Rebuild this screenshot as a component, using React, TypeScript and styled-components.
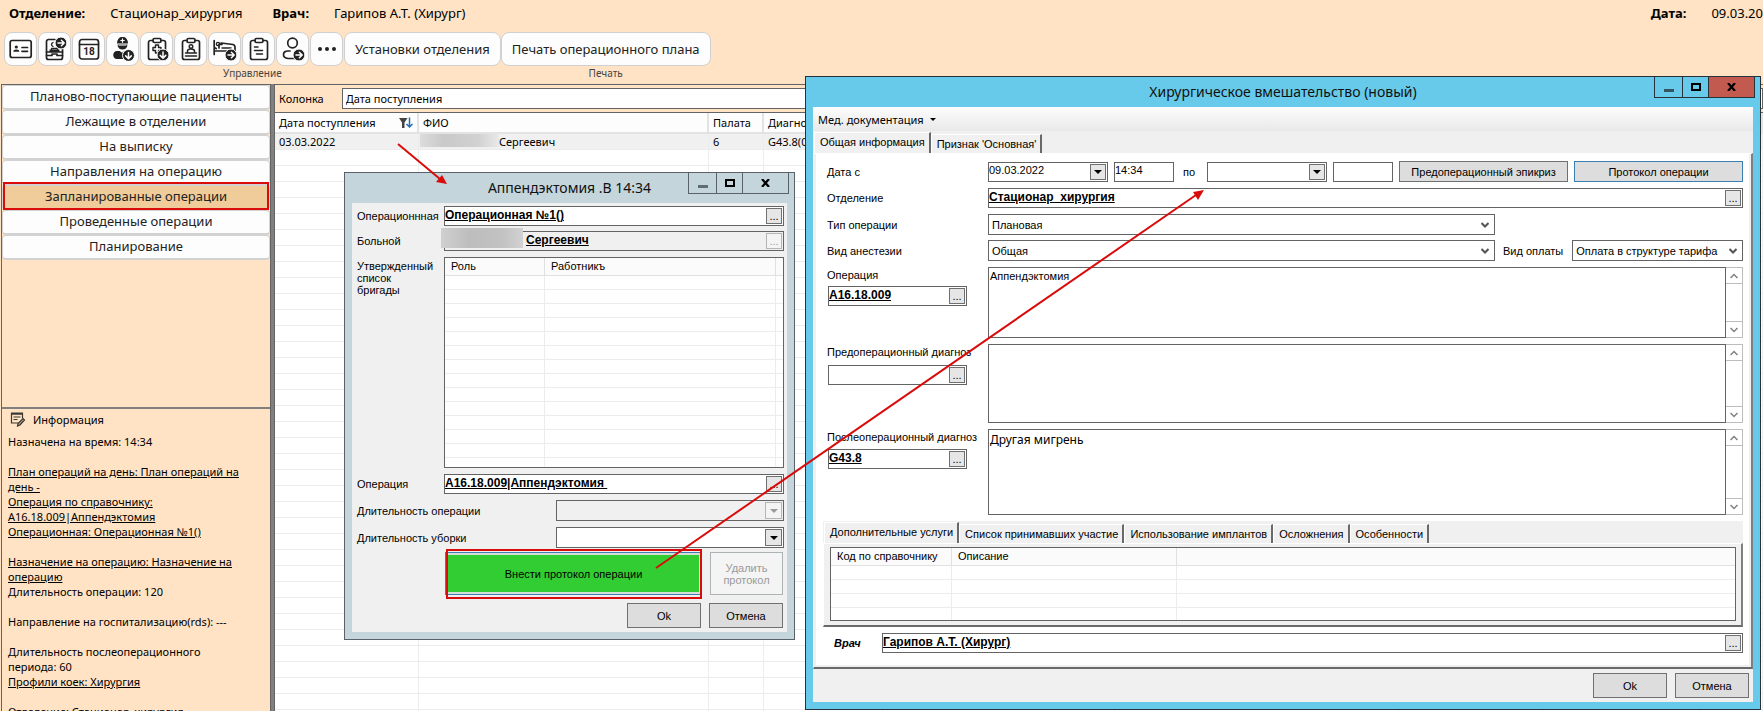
import React, { ReactNode, useId } from "react";
import styled, { createGlobalStyle, css } from "styled-components";

const ui = '"Noto Sans", "Open Sans", sans-serif';
const classic = '"Liberation Sans", Arial, sans-serif';
const c = {
  peach: "#ffe3c4",
  line: "#646464",
  face: "#f0f0f0",
  button: "#dddddd",
  grid: "#ececec",
  red: "#d90b0b",
};

const Global = createGlobalStyle`
  *, *::before, *::after { box-sizing: border-box; }
  body { margin: 0; background: #fff; color: #000; font: 11px/15px ${ui}; }
  button, input, select, textarea { font: inherit; color: inherit; margin: 0; border-radius: 0; }
  button { padding: 0; }
  input, select, textarea { outline: none; }
`;

const Screen = styled.div`
  position: relative;
  display: flex;
  flex-direction: column;
  height: 100vh;
  overflow: hidden;
  background: ${c.peach};
`;

/* Header */

const InfoBar = styled.header`
  display: flex;
  align-items: center;
  gap: 30px;
  height: 26px;
  padding-left: 9px;
  font-size: 13px;
  white-space: nowrap;
`;
const InfoPair = styled.div<{ $end?: boolean }>`
  display: flex;
  gap: 25px;
  margin-left: ${(p) => (p.$end ? "auto" : "0")};
`;

const Toolbar = styled.div`
  display: flex;
  padding: 6px 0 3px 4px;
`;
const ToolGroup = styled.div`
  display: flex;
  flex-direction: column;
  align-items: center;
  font-size: 10px;
  color: #444;
`;
const ToolRow = styled.div`
  display: flex;
  gap: 1px;
`;
const ToolButton = styled.button<{ $text?: boolean }>`
  display: flex;
  align-items: center;
  justify-content: center;
  width: ${(p) => (p.$text ? "auto" : "33px")};
  height: 34px;
  padding: 0 ${(p) => (p.$text ? "10px" : "0")};
  border: 1px solid #d0d0d0;
  border-radius: 8px;
  background: #fdfdfd;
  color: #222;
  font-size: 13px;
  white-space: nowrap;
`;

/* Sidebar */

const Body = styled.div`
  display: flex;
  flex: 1;
  min-height: 0;
`;
const Sidebar = styled.aside`
  display: flex;
  flex-direction: column;
  flex: none;
  width: 269px;
  margin-left: 1px;
  border-top: 1px solid ${c.line};
  border-left: 1px solid ${c.line};
`;
const Splitter = styled.div`
  flex: none;
  width: 5px;
  background: #808080;
  border-left: 1px solid ${c.line};
  border-right: 1px solid ${c.line};
`;
const Nav = styled.nav`
  display: flex;
  flex: none;
  flex-direction: column;
  height: 324px;
  border-bottom: 2px solid #808080;
`;
const NavButton = styled.button<{ $active?: boolean }>`
  position: relative;
  height: 25px;
  border: 1px solid #d2d2d2;
  border-bottom-width: 2px;
  border-radius: 4px;
  background: ${(p) => (p.$active ? "#efcc99" : "#fdfdfd")};
  color: #222;
  font-size: 13px;
  line-height: 18px;
  padding-bottom: 2px;
`;
const NavFrame = styled.span`
  position: absolute;
  inset: -4px 0 -2px;
  border: 2px solid ${c.red};
`;
const InfoHead = styled.h2`
  display: flex;
  flex: none;
  align-items: center;
  gap: 7px;
  margin: 0;
  padding: 1px 8px 5px;
  font-size: 11px;
  font-weight: 400;
  line-height: 19px;
`;
const InfoList = styled.div`
  display: flex;
  flex-direction: column;
  align-items: flex-start;
  width: 252px;
  padding: 0 6px;
`;
const InfoText = styled.p<{ $after?: boolean }>`
  margin: 0 0 ${(p) => (p.$after ? "15px" : "0")};
`;
const InfoLink = styled.a<{ $after?: boolean }>`
  margin-bottom: ${(p) => (p.$after ? "15px" : "0")};
  color: inherit;
`;

/* Patient list */

const Main = styled.main`
  flex: 1;
  min-width: 0;
  border-top: 1px solid ${c.line};
`;
const FilterRow = styled.div`
  display: flex;
  align-items: center;
  gap: 18px;
  height: 27px;
  padding-left: 4px;
`;
const FilterInput = styled.input`
  flex: 1;
  height: 21px;
  padding: 0 3px;
  border: 1px solid ${c.line};
  background: #fff;
`;
const PatientTable = styled.table`
  width: 100%;
  table-layout: fixed;
  border-collapse: separate;
  border-spacing: 0;
  border-top: 1px solid ${c.line};
  background: #fff;
  th {
    height: 21px;
    padding: 0 4px;
    border-right: 2px solid #e3e3e3;
    border-bottom: 2px solid #e3e3e3;
    background: #fdfdfd;
    font-weight: 400;
    text-align: left;
    white-space: nowrap;
  }
  td {
    height: 16px;
    padding: 0 4px;
    border-right: 1px solid ${c.grid};
    border-bottom: 1px solid ${c.grid};
    line-height: 15px;
    white-space: nowrap;
    overflow: hidden;
  }
`;
const PatientRow = styled.tr`
  background: #f0f0f0;
`;
const SortHead = styled.span`
  display: flex;
  align-items: center;
  justify-content: space-between;
`;
const Masked = styled.span`
  display: inline-block;
  width: 79px;
  height: 13px;
  margin-left: -3px;
  vertical-align: top;
  background: linear-gradient(90deg, #dcdcdc, #c9c9c9 30%, #d2d2d2 75%, #e9e9e9);
`;

/* Windows */

const Window = styled.section<{ $active?: boolean }>`
  position: absolute;
  display: flex;
  flex-direction: column;
  padding: 0 7px 7px;
  border: 1px solid ${(p) => (p.$active ? "#26323a" : "#59626a")};
  background: ${(p) => (p.$active ? "#67caea" : "#c4d5db")};
  font: 11px/12px ${classic};
`;
const PlanWindow = styled(Window)`
  top: 172px;
  left: 344px;
  width: 451px;
`;
const SurgeryWindow = styled(Window)`
  top: 76px;
  left: 805px;
  right: 2px;
`;
const WindowTitle = styled.h1`
  margin: 0;
  height: 30px;
  font: 400 14px/30px ${ui};
  text-align: center;
  color: #111;
`;
const WindowControls = styled.div<{ $active?: boolean }>`
  position: absolute;
  top: -1px;
  right: 5px;
  display: flex;
  button {
    display: flex;
    align-items: center;
    justify-content: center;
    width: 29px;
    height: 22px;
    margin-left: -1px;
    border: 1px solid ${(p) => (p.$active ? "#26323a" : "#59626a")};
    background: none;
  }
  button:nth-child(2) { width: 27px; }
  button:last-child {
    width: 47px;
    background: ${(p) => (p.$active ? "#c35a4f" : "none")};
  }
`;
const Client = styled.div`
  display: flex;
  flex-direction: column;
  background: ${c.face};
`;

/* Controls */

const box = css`
  border: 1px solid ${c.line};
  background: #fff;
`;
const FieldBox = styled.div<{ $disabled?: boolean; $width?: number }>`
  position: relative;
  display: flex;
  flex: ${(p) => (p.$width ? "none" : "1")};
  width: ${(p) => (p.$width ? `${p.$width}px` : "auto")};
  min-width: 0;
  height: 20px;
  padding: 1px 1px 1px 0;
  ${box}
  background: ${(p) => (p.$disabled ? c.face : "#fff")};
`;
const FieldInput = styled.input<{ $link?: boolean; $inset?: boolean }>`
  flex: 1;
  width: 0;
  height: ${(p) => (p.$link ? "14px" : "12px")};
  padding: 0;
  padding-left: ${(p) => (p.$inset ? "81px" : "0")};
  border: 0;
  background: none;
  ${(p) =>
    p.$link &&
    css`
      font-size: 12px;
      font-weight: 700;
      text-decoration: underline;
    `}
`;
const SmallButton = styled.button`
  display: flex;
  align-items: center;
  justify-content: center;
  flex: none;
  width: 16px;
  height: 16px;
  border: 1px solid #707070;
  background: #e6e6e6;
  line-height: 10px;
  &:disabled {
    border-color: #b5b5b5;
    background: #f4f4f4;
    color: #999;
  }
`;
const NameMask = styled.span`
  position: absolute;
  top: -4px;
  left: -4px;
  width: 82px;
  height: 20px;
  background: linear-gradient(90deg, #d0d0d0, #bdbdbd 35%, #c2c2c2 75%, #d2d2d2);
`;
const SelectBox = styled.div<{ $disabled?: boolean }>`
  position: relative;
  display: flex;
  flex: 1;
  height: 21px;
  ${box}
  background: ${(p) => (p.$disabled ? c.face : "#fff")};
  select {
    flex: 1;
    appearance: none;
    padding: 0 20px 0 3px;
    border: 0;
    background: none;
  }
`;
const SelectMark = styled.span<{ $boxed?: boolean; $disabled?: boolean }>`
  position: absolute;
  top: 1px;
  right: 1px;
  display: flex;
  align-items: center;
  justify-content: center;
  width: 17px;
  height: 17px;
  pointer-events: none;
  color: ${(p) => (p.$disabled ? "#999" : "#000")};
  border: ${(p) => (p.$boxed ? `1px solid ${p.$disabled ? "#b5b5b5" : "#707070"}` : "0")};
  background: ${(p) => (p.$boxed ? (p.$disabled ? "#f4f4f4" : "#e6e6e6") : "none")};
`;
const PushButton = styled.button<{ $fill?: boolean; $focus?: boolean }>`
  flex: ${(p) => (p.$fill ? "1" : "none")};
  width: 74px;
  height: ${(p) => (p.$fill ? "21px" : "25px")};
  border: 1px solid ${(p) => (p.$focus ? "#3c7fb1" : "#707070")};
  background: ${c.button};
  white-space: nowrap;
`;
const RowPair = styled.div`
  display: flex;
  flex-direction: column;
  gap: 5px;
`;

/* Operation plan window */

const PlanForm = styled.form`
  display: flex;
  flex-direction: column;
  gap: 6px;
  padding: 3px 3px 4px 5px;
`;
const PlanRow = styled.div<{ $wide?: boolean; $top?: boolean }>`
  display: flex;
  align-items: ${(p) => (p.$top ? "flex-start" : "center")};
  label, > span {
    flex: none;
    width: ${(p) => (p.$wide ? "199px" : "87px")};
    padding-right: 12px;
  }
  > label, > span { padding-top: ${(p) => (p.$top ? "3px" : "0")}; }
`;
const NameLabel = styled.label`
  white-space: nowrap;
`;
const ListFrame = styled.div<{ $height: number }>`
  flex: 1;
  height: ${(p) => p.$height}px;
  overflow: hidden;
  ${box}
`;
const ListTable = styled.table`
  width: 100%;
  table-layout: fixed;
  border-collapse: separate;
  border-spacing: 0;
  th {
    height: 18px;
    padding: 0 6px 2px;
    border-right: 1px solid #e0e0e0;
    border-bottom: 1px solid #e0e0e0;
    background: #fbfbfb;
    font-weight: 400;
    text-align: left;
    white-space: nowrap;
  }
  td {
    height: 14px;
    padding: 0;
    border-right: 1px solid ${c.grid};
    border-bottom: 1px solid ${c.grid};
  }
  th:last-child, td:last-child { border-right: 0; }
`;
const ActionRow = styled.div`
  display: flex;
  gap: 8px;
  padding-left: 88px;
  margin-top: -2px;
`;
const ProtocolWrap = styled.div`
  position: relative;
  flex: 1;
  display: flex;
`;
const ProtocolButton = styled.button`
  flex: 1;
  height: 43px;
  border: 1px solid #3c7fb1;
  background: #32cd32;
  box-shadow: inset 0 0 0 2px #d5dfd8;
`;
const ProtocolFrame = styled.span`
  position: absolute;
  inset: -3px 0 -4px 1px;
  border: 2px solid ${c.red};
  pointer-events: none;
`;
const DeleteButton = styled.button`
  width: 73px;
  height: 43px;
  margin-right: 1px;
  border: 1px solid #adb2b5;
  background: #f4f4f4;
  color: #9a9a9a;
`;
const Buttons = styled.div<{ $footer?: boolean }>`
  display: flex;
  justify-content: flex-end;
  gap: 8px;
  padding: ${(p) => (p.$footer ? "4px 4px" : "2px 1px 0")};
`;

/* Surgery window */

const MenuStrip = styled.div`
  display: flex;
  height: 24px;
  padding: 0 5px;
  background: linear-gradient(#fcfcfc, #e9e9e9);
  button {
    display: flex;
    align-items: center;
    gap: 6px;
    border: 0;
    background: none;
    font: 11px/15px ${ui};
  }
`;
const TabList = styled.div`
  display: flex;
  align-items: flex-end;
  height: 22px;
  padding-left: 1px;
`;
const Tab = styled.button<{ $active?: boolean }>`
  height: ${(p) => (p.$active ? "21px" : "19px")};
  padding: 0 4px ${(p) => (p.$active ? "3px" : "0")} 5px;
  border: 0;
  border-top: 1px solid #fff;
  border-left: 1px solid #fff;
  border-right: 2px solid #696969;
  background: ${c.face};
  white-space: nowrap;
`;
const TabPage = styled.div`
  border: solid;
  border-width: 1px 2px 2px 1px;
  border-color: #fff #808080 #696969 #fff;
  background: ${c.face};
  padding: 0 2px 2px;
`;
const SurgeryForm = styled.form`
  display: flex;
  flex-direction: column;
  gap: 6px;
  padding: 7px 6px 12px 11px;
  background: #fff;
`;
const FormRow = styled.div`
  display: grid;
  grid-template-columns: 161px minmax(0, 1fr);
  align-items: center;
`;
const Line = styled.div<{ $gap: number }>`
  display: flex;
  align-items: center;
  gap: ${(p) => p.$gap}px;
`;
const ToLabel = styled.label`
  padding: 0 6px 0 3px;
`;
const Split = styled.div`
  display: grid;
  grid-template-columns: minmax(0, 1fr) 240px;
  gap: 8px;
`;
const CodeColumn = styled.div<{ $gap: number }>`
  display: flex;
  flex-direction: column;
  align-self: start;
  gap: ${(p) => p.$gap}px;
  width: 140px;
  padding: 2px 0 0 1px;
  label {
    margin-left: -1px;
    white-space: nowrap;
  }
  div { flex: none; }
`;
const MemoBox = styled.div<{ $height: number }>`
  display: flex;
  height: ${(p) => p.$height}px;
`;
const Memo = styled.textarea<{ $large?: boolean }>`
  flex: 1;
  height: 100%;
  padding: 2px 1px;
  resize: none;
  overflow: hidden;
  ${box}
  ${(p) => p.$large && css`font: 12px/15px ${ui};`}
`;
const ScrollBar = styled.div`
  display: flex;
  flex-direction: column;
  justify-content: space-between;
  width: 17px;
  border: 1px solid #bdbdbd;
  border-left: 0;
  button {
    display: flex;
    align-items: center;
    justify-content: center;
    height: 16px;
    border: 0;
    background: #fff;
    color: #808080;
  }
  button:first-child { border-bottom: 1px solid #bdbdbd; }
  button:last-child { border-top: 1px solid #bdbdbd; }
`;
const ServiceTabs = styled.div`
  margin-left: -4px;
  background: ${c.face};
`;
const ServicePage = styled(TabPage)`
  padding: 3px 5px 4px 6px;
`;
const DoctorRow = styled.div`
  display: flex;
  align-items: center;
  padding-left: 7px;
  label {
    width: 48px;
    font-weight: 700;
    font-style: italic;
  }
`;

const Arrows = styled.svg`
  position: absolute;
  inset: 0;
  width: 100%;
  height: 100%;
  pointer-events: none;
`;

/* Icons */

const Svg = ({ children }: { children: ReactNode }) => (
  <svg width="24" height="24" viewBox="0 0 24 24" fill="none" stroke="#222" strokeWidth="1.7" strokeLinecap="round" strokeLinejoin="round" aria-hidden="true">
    {children}
  </svg>
);

const Badge = ({ x, y, down }: { x: number; y: number; down?: boolean }) => (
  <g transform={`translate(${x} ${y}) rotate(${down ? 90 : 0})`}>
    <circle r="6" fill="#222" stroke="#fdfdfd" strokeWidth="1" />
    <path d="M-3 0H3M0.4 -2.8L3.2 0L0.4 2.8" stroke="#fff" strokeWidth="1.5" />
  </g>
);

const Clipboard = () => (
  <>
    <path d="M8 3.5H5.5a2 2 0 0 0-2 2v15a2 2 0 0 0 2 2h13a2 2 0 0 0 2-2v-15a2 2 0 0 0-2-2H16" />
    <rect x="8" y="1.5" width="8" height="4" rx="1.5" />
  </>
);

const CardIcon = () => (
  <Svg>
    <rect x="1.2" y="3.5" width="21" height="17" rx="2" />
    <circle cx="7.3" cy="10" r="1.6" fill="#222" stroke="none" />
    <path d="M4.3 14.8a3 2.2 0 0 1 6 0z" fill="#222" stroke="none" />
    <path d="M13 10.5h5.5M13 14.3h5.5" />
  </Svg>
);
const AdmissionIcon = () => (
  <Svg>
    <path d="M12 2.5H5.5a2 2 0 0 0-2 2V20.5a2 2 0 0 0 2 2h12a2 2 0 0 0 2-2V12" />
    <path d="M8.5 13v-1.5h6V13M10 5.5c-2 1-2 3 0 4" strokeWidth="1.3" />
    <path d="M3.5 15h16M3.5 18.5h5.5v-1.5h5v1.5h5.5" />
    <rect x="6.5" y="12.5" width="10" height="2.5" fill="#222" stroke="none" />
    <Badge x={18} y={6} />
  </Svg>
);
const CalendarIcon = () => (
  <Svg>
    <rect x="2.5" y="2.5" width="19" height="19.5" rx="2.5" />
    <path d="M2.5 7.5h19" />
    <text x="12" y="18.3" textAnchor="middle" fontFamily="Roboto, sans-serif" fontWeight="700" fontSize="10" fill="#222" stroke="none">18</text>
  </Svg>
);
const SurgeonIcon = () => (
  <Svg>
    <path d="M6 6.5c0-9 11-9 11 0z" fill="#222" stroke="none" />
    <path d="M11.5 1.8v3.4M9.8 3.5h3.4" stroke="#fff" strokeWidth="1.2" />
    <path d="M6.7 7.5h9.6v1a4.8 4 0 0 1-9.6 0z" fill="#222" stroke="none" />
    <path d="M8 8.2h7" stroke="#fff" strokeWidth="0.8" />
    <path d="M6 14h3c1 2 5 2 6 0l4 1v7H6c-5 0-5-8 0-8z" fill="#222" stroke="none" />
    <Badge x={17.5} y={18.5} down />
  </Svg>
);
const MedClipboardIcon = () => (
  <Svg>
    <Clipboard />
    <path d="M10.5 8h3v2.5H16v3h-2.5V16h-3v-2.5H8v-3h2.5z" strokeWidth="1.4" />
    <Badge x={18} y={18} down />
  </Svg>
);
const PatientClipboardIcon = () => (
  <Svg>
    <Clipboard />
    <circle cx="12" cy="9.5" r="1.8" strokeWidth="1.4" />
    <path d="M8.5 15v-1a3.5 2 0 0 1 7 0v1M6.5 16h11M6.5 19h11" strokeWidth="1.5" />
  </Svg>
);
const BedIcon = () => (
  <Svg>
    <path d="M1.2 3.5v14M1.2 14H14M1.2 10.5l2 1M6 11V7.5h3M8 6l12 1.5a3 3 0 0 1 2 3v3" />
    <circle cx="5" cy="7" r="1.6" strokeWidth="1.4" />
    <path d="M9 11h9" strokeWidth="1.4" />
    <Badge x={18} y={18} />
  </Svg>
);
const TasksIcon = () => (
  <Svg>
    <Clipboard />
    <path d="M7.5 10h3.5M7.5 13.5h8M9.5 17h6" strokeWidth="1.5" />
  </Svg>
);
const TransferIcon = () => (
  <Svg>
    <circle cx="11.5" cy="6" r="4.8" />
    <path d="M9 14H7c-6 0-6 7 0 7.5h6" />
    <Badge x={18} y={18} />
  </Svg>
);
const MoreIcon = () => (
  <Svg>
    <g fill="#222" stroke="none">
      <circle cx="5" cy="12" r="2" />
      <circle cx="12" cy="12" r="2" />
      <circle cx="19" cy="12" r="2" />
    </g>
  </Svg>
);
const NoteIcon = () => (
  <svg width="16" height="15" viewBox="0 0 16 15" fill="none" stroke="#3c3833" strokeWidth="1.2" aria-hidden="true">
    <path d="M8 11H1.5V1h11v5.5M1.5 2.2h11" />
    <path d="M3.5 5h7M3.5 7.5h4" />
    <path d="M7.5 14l.5-2.5 5-5 1.5 1.5-4.5 5z" fill="#a89c8b" />
  </svg>
);
const FilterIcon = () => (
  <svg width="14" height="12" viewBox="0 0 14 12" aria-hidden="true">
    <path d="M0 1h8.5L5.5 5.5V11H3V5.5z" fill="#444" />
    <path d="M10.5 0.5v9M7.5 7l3 3 3-3" fill="none" stroke="#1f6fb5" strokeWidth="1.5" />
  </svg>
);
const Triangle = ({ small }: { small?: boolean }) => (
  <svg width={small ? 6 : 8} height={small ? 3 : 4} viewBox="0 0 8 4" aria-hidden="true">
    <path d="M0 0h8L4 4z" fill="currentColor" />
  </svg>
);
const Chevron = ({ up, dark }: { up?: boolean; dark?: boolean }) => (
  <svg width="8" height="6" viewBox="0 0 8 6" fill="none" stroke={dark ? "#555" : "currentColor"} strokeWidth={dark ? 2 : 1.5} aria-hidden="true">
    <path d={up ? "M0.5 5L4 1.5L7.5 5" : "M0.5 1L4 4.5L7.5 1"} />
  </svg>
);

/* Composite controls */

const Controls = ({ active }: { active?: boolean }) => (
  <WindowControls $active={active}>
    <button type="button" aria-label="Свернуть">
      <svg width="10" height="12" aria-hidden="true"><path d="M0 8h10v3H0z" fill={active ? "#33535f" : "#626c70"} /></svg>
    </button>
    <button type="button" aria-label="Развернуть">
      <svg width="10" height="8" aria-hidden="true"><path d="M1 1h8v6H1z" fill="none" stroke="#000" strokeWidth="2" /></svg>
    </button>
    <button type="button" aria-label="Закрыть">
      <svg width="9" height="8" aria-hidden="true"><path d="M1 0l7 8M8 0L1 8" stroke="#000" strokeWidth="2.2" /></svg>
    </button>
  </WindowControls>
);

type LookupProps = { id: string; value?: string; disabled?: boolean; masked?: boolean };
const Lookup = ({ id, value = "", disabled, masked }: LookupProps) => (
  <FieldBox $disabled={disabled}>
    <FieldInput id={id} defaultValue={value} readOnly={disabled} $link $inset={masked} />
    {masked && <NameMask />}
    <SmallButton type="button" disabled={disabled} aria-label="Выбрать">...</SmallButton>
  </FieldBox>
);

const DateField = ({ id, value = "" }: { id: string; value?: string }) => (
  <FieldBox $width={120}>
    <FieldInput id={id} defaultValue={value} />
    <SmallButton type="button" aria-label="Календарь"><Triangle /></SmallButton>
  </FieldBox>
);

type DropProps = { id: string; value?: string; boxed?: boolean; disabled?: boolean };
const Drop = ({ id, value = "", boxed, disabled }: DropProps) => (
  <SelectBox $disabled={disabled}>
    <select id={id} disabled={disabled} defaultValue={value}>
      <option>{value}</option>
    </select>
    <SelectMark $boxed={boxed} $disabled={disabled}>{boxed ? <Triangle /> : <Chevron dark />}</SelectMark>
  </SelectBox>
);

type MemoFieldProps = { label: string; code?: string; text?: string; height: number; gap: number; large?: boolean };
const MemoField = ({ label, code, text, height, gap, large }: MemoFieldProps) => {
  const id = useId();
  return (
    <FormRow>
      <CodeColumn $gap={gap}>
        <label htmlFor={id}>{label}</label>
        <Lookup id={id} value={code} />
      </CodeColumn>
      <MemoBox $height={height}>
        <Memo aria-label={label} defaultValue={text} $large={large} />
        <ScrollBar>
          <button type="button" aria-label="Вверх"><Chevron up /></button>
          <button type="button" aria-label="Вниз"><Chevron /></button>
        </ScrollBar>
      </MemoBox>
    </FormRow>
  );
};

type ListProps = { height: number; heads: string[]; widths: (number | undefined)[]; rows: number };
const List = ({ height, heads, widths, rows }: ListProps) => (
  <ListFrame $height={height}>
    <ListTable>
      <colgroup>{widths.map((w, i) => <col key={i} width={w} />)}</colgroup>
      <thead><tr>{heads.map((h, i) => <th key={i}>{h}</th>)}</tr></thead>
      <tbody>
        {Array.from({ length: rows }, (_, r) => (
          <tr key={r}>{heads.map((_, i) => <td key={i} />)}</tr>
        ))}
      </tbody>
    </ListTable>
  </ListFrame>
);

const tools = [CardIcon, AdmissionIcon, CalendarIcon, SurgeonIcon, MedClipboardIcon, PatientClipboardIcon, BedIcon, TasksIcon, TransferIcon, MoreIcon];
const toolNames = ["Карта", "Поступление", "Календарь", "Хирург", "Назначения", "Пациент", "Койка", "Задачи", "Перевод", "Ещё"];
const sections = ["Планово-поступающие пациенты", "Лежащие в отделении", "На выписку", "Направления на операцию", "Запланированные операции", "Проведенные операции", "Планирование"];
const patientColumns = [144, 290, 55, 119, 232, 284, 144, 157, undefined];
const serviceTabs = ["Дополнительные услуги", "Список принимавших участие", "Использование имплантов", "Осложнения", "Особенности"];

const Patients = () => (
  <PatientTable>
    <colgroup>{patientColumns.map((w, i) => <col key={i} width={w} />)}</colgroup>
    <thead>
      <tr>
        <th><SortHead>Дата поступления <FilterIcon /></SortHead></th>
        <th>ФИО</th>
        <th>Палата</th>
        <th>Диагноз</th>
        {patientColumns.slice(4).map((_, i) => <th key={i} />)}
      </tr>
    </thead>
    <tbody>
      <PatientRow>
        <td>03.03.2022</td>
        <td><Masked />Сергеевич</td>
        <td>6</td>
        <td>G43.8(0)</td>
        {patientColumns.slice(4).map((_, i) => <td key={i} />)}
      </PatientRow>
      {Array.from({ length: 36 }, (_, r) => (
        <tr key={r}>{patientColumns.map((_, i) => <td key={i} />)}</tr>
      ))}
    </tbody>
  </PatientTable>
);

const OperationPlan = () => (
  <PlanWindow>
    <WindowTitle>Аппендэктомия .В 14:34</WindowTitle>
    <Controls />
    <Client>
      <PlanForm>
        <RowPair>
          <PlanRow>
            <NameLabel htmlFor="room">Операционнная</NameLabel>
            <Lookup id="room" value="Операционная №1()" />
          </PlanRow>
          <PlanRow>
            <label htmlFor="patient">Больной</label>
            <Lookup id="patient" value="Сергеевич" disabled masked />
          </PlanRow>
        </RowPair>
        <PlanRow $top>
          <span>Утвержденный список бригады</span>
          <List height={211} heads={["Роль", "Работникъ", ""]} widths={[100, 231, undefined]} rows={15} />
        </PlanRow>
        <PlanRow>
          <label htmlFor="operation">Операция</label>
          <Lookup id="operation" value="A16.18.009|Аппендэктомия " />
        </PlanRow>
        <PlanRow $wide>
          <label htmlFor="duration">Длительность операции</label>
          <Drop id="duration" boxed disabled />
        </PlanRow>
        <PlanRow $wide>
          <label htmlFor="cleaning">Длительность уборки</label>
          <Drop id="cleaning" boxed />
        </PlanRow>
        <ActionRow>
          <ProtocolWrap>
            <ProtocolButton type="button">Внести протокол операции</ProtocolButton>
            <ProtocolFrame />
          </ProtocolWrap>
          <DeleteButton type="button" disabled>Удалить протокол</DeleteButton>
        </ActionRow>
        <Buttons>
          <PushButton type="button">Ok</PushButton>
          <PushButton type="button">Отмена</PushButton>
        </Buttons>
      </PlanForm>
    </Client>
  </PlanWindow>
);

const Surgery = () => (
  <SurgeryWindow $active>
    <WindowTitle>Хирургическое вмешательство (новый)</WindowTitle>
    <Controls active />
    <Client>
      <MenuStrip><button type="button">Мед. документация <Triangle small /></button></MenuStrip>
      <TabList role="tablist">
        <Tab type="button" role="tab" aria-selected $active>Общая информация</Tab>
        <Tab type="button" role="tab">Признак 'Основная'</Tab>
      </TabList>
      <TabPage>
        <SurgeryForm>
          <FormRow>
            <label htmlFor="from">Дата с</label>
            <Line $gap={6}>
              <DateField id="from" value="09.03.2022" />
              <FieldBox $width={60}><FieldInput defaultValue="14:34" aria-label="Время начала" /></FieldBox>
              <ToLabel htmlFor="to">по</ToLabel>
              <DateField id="to" />
              <FieldBox $width={60}><FieldInput aria-label="Время окончания" /></FieldBox>
              <PushButton type="button" $fill>Предоперационный эпикриз</PushButton>
              <PushButton type="button" $fill $focus>Протокол операции</PushButton>
            </Line>
          </FormRow>
          <FormRow>
            <label htmlFor="department">Отделение</label>
            <Lookup id="department" value="Стационар_хирургия" />
          </FormRow>
          <RowPair>
            <FormRow>
              <label htmlFor="kind">Тип операции</label>
              <Split><Drop id="kind" value="Плановая" /></Split>
            </FormRow>
            <FormRow>
              <label htmlFor="anesthesia">Вид анестезии</label>
              <Split>
                <Drop id="anesthesia" value="Общая" />
                <Line $gap={9}>
                  <label htmlFor="payment">Вид оплаты</label>
                  <Drop id="payment" value="Оплата в структуре тарифа" />
                </Line>
              </Split>
            </FormRow>
          </RowPair>
          <MemoField label="Операция" code="A16.18.009" text="Аппендэктомия" height={71} gap={5} />
          <MemoField label="Предоперационный диагноз" height={79} gap={7} />
          <MemoField label="Послеоперационный диагноз" code="G43.8" text="Другая мигрень" height={86} gap={6} large />
          <ServiceTabs>
            <TabList role="tablist">
              {serviceTabs.map((t, i) => <Tab key={t} role="tab" type="button" $active={i === 0}>{t}</Tab>)}
            </TabList>
            <ServicePage>
              <List height={74} heads={["Код по справочнику", "Описание", ""]} widths={[121, 225, undefined]} rows={4} />
            </ServicePage>
          </ServiceTabs>
          <DoctorRow>
            <label htmlFor="doctor">Врач</label>
            <Lookup id="doctor" value="Гарипов А.Т. (Хирург)" />
          </DoctorRow>
        </SurgeryForm>
      </TabPage>
      <Buttons $footer>
        <PushButton type="button">Ok</PushButton>
        <PushButton type="button">Отмена</PushButton>
      </Buttons>
    </Client>
  </SurgeryWindow>
);

export default function App() {
  return (
    <Screen>
      <Global />
      <InfoBar>
        <InfoPair><b>Отделение:</b><span>Стационар_хирургия</span></InfoPair>
        <InfoPair><b>Врач:</b><span>Гарипов А.Т. (Хирург)</span></InfoPair>
        <InfoPair $end><b>Дата:</b><span>09.03.20</span></InfoPair>
      </InfoBar>
      <Toolbar>
        <ToolGroup>
          <ToolRow>
            {tools.map((Icon, i) => (
              <ToolButton key={i} type="button" aria-label={toolNames[i]}><Icon /></ToolButton>
            ))}
            <ToolButton type="button" $text>Установки отделения</ToolButton>
          </ToolRow>
          Управление
        </ToolGroup>
        <ToolGroup>
          <ToolButton type="button" $text>Печать операционного плана</ToolButton>
          Печать
        </ToolGroup>
      </Toolbar>
      <Body>
        <Sidebar>
          <Nav>
            {sections.map((s, i) => (
              <NavButton key={s} type="button" $active={i === 4}>
                {s}
                {i === 4 && <NavFrame />}
              </NavButton>
            ))}
          </Nav>
          <InfoHead><NoteIcon />Информация</InfoHead>
          <InfoList>
            <InfoText $after>Назначена на время: 14:34</InfoText>
            <InfoLink href="#">План операций на день: План операций на день -</InfoLink>
            <InfoLink href="#">Операция по справочнику:<br />A16.18.009|Аппендэктомия</InfoLink>
            <InfoLink href="#" $after>Операционная: Операционная №1()</InfoLink>
            <InfoLink href="#">Назначение на операцию: Назначение на операцию</InfoLink>
            <InfoText $after>Длительность операции: 120</InfoText>
            <InfoText $after>Направление на госпитализацию(rds): ---</InfoText>
            <InfoText>Длительность послеоперационного периода: 60</InfoText>
            <InfoLink href="#" $after>Профили коек: Хирургия</InfoLink>
            <InfoLink href="#">Отделение: Стационар_хирургия</InfoLink>
          </InfoList>
        </Sidebar>
        <Splitter />
        <Main>
          <FilterRow>
            <label htmlFor="column">Колонка</label>
            <FilterInput id="column" defaultValue="Дата поступления" />
          </FilterRow>
          <Patients />
        </Main>
      </Body>
      <OperationPlan />
      <Surgery />
      <Arrows aria-hidden="true">
        <g stroke={c.red} strokeWidth="2" fill={c.red}>
          <path d="M398 144L440 179" />
          <path d="M447 184L436 182L442 175z" stroke="none" />
          <path d="M656 568L1196 195" />
          <path d="M1204 190L1198 200L1193 192z" stroke="none" />
        </g>
      </Arrows>
    </Screen>
  );
}
